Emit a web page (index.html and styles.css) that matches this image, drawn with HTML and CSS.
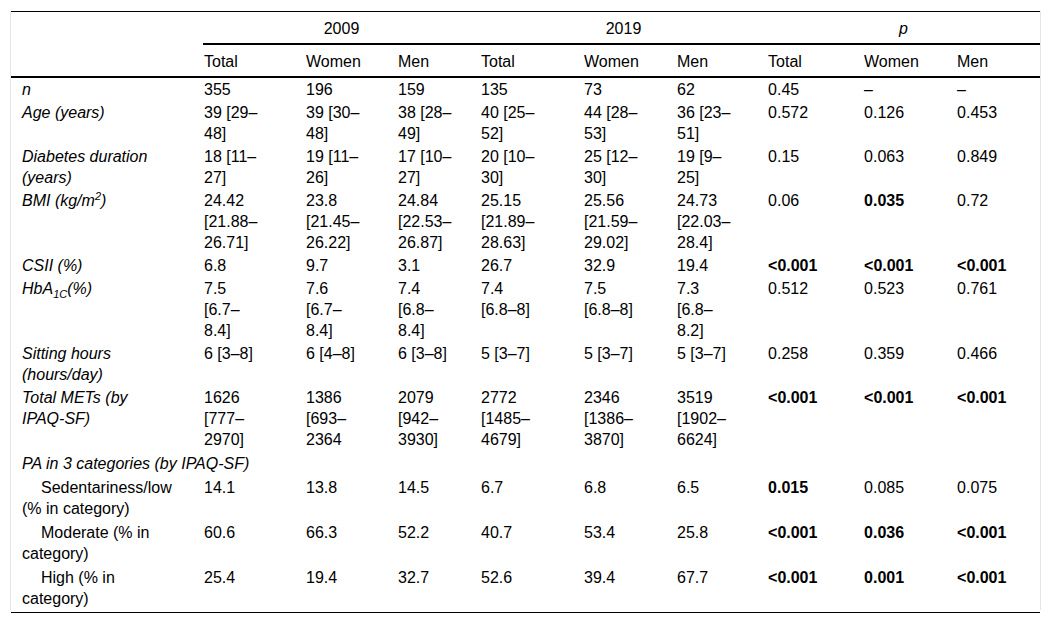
FILE: index.html
```html
<!DOCTYPE html>
<html lang="en">
<head>
<meta charset="utf-8">
<title>Table</title>
<link rel="stylesheet" href="styles.css">
</head>
<body>
<div class="wrap">
  <table class="data">
    <colgroup>
      <col class="c-label">
      <col class="c2"><col class="c3"><col class="c4">
      <col class="c5"><col class="c6"><col class="c7">
      <col class="c8"><col class="c9"><col class="c10">
    </colgroup>
    <thead>
      <tr class="years">
        <th rowspan="2" class="corner"></th>
        <th colspan="3">2009</th>
        <th colspan="3">2019</th>
        <th colspan="3"><i>p</i></th>
      </tr>
      <tr class="groups">
        <th>Total</th><th>Women</th><th>Men</th>
        <th>Total</th><th>Women</th><th>Men</th>
        <th>Total</th><th>Women</th><th>Men</th>
      </tr>
    </thead>
    <tbody>
      <tr><td class="lbl"><i>n</i></td><td>355</td><td>196</td><td>159</td><td>135</td><td>73</td><td>62</td><td>0.45</td><td>–</td><td>–</td></tr>
      <tr><td class="lbl"><i>Age (years)</i></td><td>39 [29–48]</td><td>39 [30–48]</td><td>38 [28–49]</td><td>40 [25–52]</td><td>44 [28–53]</td><td>36 [23–51]</td><td>0.572</td><td>0.126</td><td>0.453</td></tr>
      <tr><td class="lbl"><i>Diabetes duration (years)</i></td><td>18 [11–27]</td><td>19 [11–26]</td><td>17 [10–27]</td><td>20 [10–30]</td><td>25 [12–30]</td><td>19 [9–25]</td><td>0.15</td><td>0.063</td><td>0.849</td></tr>
      <tr><td class="lbl"><i>BMI (kg/m<sup>2</sup>)</i></td><td>24.42 [21.88–26.71]</td><td>23.8 [21.45–26.22]</td><td>24.84 [22.53–26.87]</td><td>25.15 [21.89–28.63]</td><td>25.56 [21.59–29.02]</td><td>24.73 [22.03–28.4]</td><td>0.06</td><td><b>0.035</b></td><td>0.72</td></tr>
      <tr><td class="lbl"><i>CSII (%)</i></td><td>6.8</td><td>9.7</td><td>3.1</td><td>26.7</td><td>32.9</td><td>19.4</td><td><b>&lt;0.001</b></td><td><b>&lt;0.001</b></td><td><b>&lt;0.001</b></td></tr>
      <tr><td class="lbl"><i>HbA<sub>1C</sub>(%)</i></td><td>7.5 [6.7–8.4]</td><td>7.6 [6.7–8.4]</td><td>7.4 [6.8–8.4]</td><td>7.4 [6.8–8]</td><td>7.5 [6.8–8]</td><td>7.3 [6.8–8.2]</td><td>0.512</td><td>0.523</td><td>0.761</td></tr>
      <tr><td class="lbl"><i>Sitting hours (hours/day)</i></td><td>6 [3–8]</td><td>6 [4–8]</td><td>6 [3–8]</td><td>5 [3–7]</td><td>5 [3–7]</td><td>5 [3–7]</td><td>0.258</td><td>0.359</td><td>0.466</td></tr>
      <tr><td class="lbl"><i>Total METs (by <span class="nowrap">IPAQ-SF)</span></i></td><td>1626 [777–2970]</td><td>1386 [693–2364</td><td>2079 [942–3930]</td><td>2772 [1485–4679]</td><td>2346 [1386–3870]</td><td>3519 [1902–6624]</td><td><b>&lt;0.001</b></td><td><b>&lt;0.001</b></td><td><b>&lt;0.001</b></td></tr>
      <tr class="cat"><td class="lbl span" colspan="10"><i>PA in 3 categories (by IPAQ-SF)</i></td></tr>
      <tr class="cat"><td class="lbl sub">Sedentariness/low (% in category)</td><td>14.1</td><td>13.8</td><td>14.5</td><td>6.7</td><td>6.8</td><td>6.5</td><td><b>0.015</b></td><td>0.085</td><td>0.075</td></tr>
      <tr class="cat"><td class="lbl sub">Moderate (% in category)</td><td>60.6</td><td>66.3</td><td>52.2</td><td>40.7</td><td>53.4</td><td>25.8</td><td><b>&lt;0.001</b></td><td><b>0.036</b></td><td><b>&lt;0.001</b></td></tr>
      <tr class="cat"><td class="lbl sub">High (% in category)</td><td>25.4</td><td>19.4</td><td>32.7</td><td>52.6</td><td>39.4</td><td>67.7</td><td><b>&lt;0.001</b></td><td><b>0.001</b></td><td><b>&lt;0.001</b></td></tr>
    </tbody>
  </table>
</div>
<div class="bottom-rule"></div>
</body>
</html>
```

FILE: styles.css
```css
html, body {
  background: #fff;
}
body {
  margin: 11px 10px 0 10px;
  font-family: "Liberation Sans", Arial, sans-serif;
  font-size: 16px;
  line-height: 21px;
  color: #000;
}
.wrap {
  width: 1029px;
  border-left: 1px solid #e6e6e6;
  border-right: 1px solid #e6e6e6;
}
.data {
  width: 1029px;
  table-layout: fixed;
  border-collapse: collapse;
  border-top: 1px solid #000;
}
.c-label { width: 192px; }
.c2 { width: 102px; }
.c3 { width: 92px; }
.c4 { width: 83px; }
.c5 { width: 103px; }
.c6 { width: 93px; }
.c7 { width: 91px; }
.c8 { width: 96px; }
.c9 { width: 93px; }
.c10 { width: 84px; }

th {
  font-weight: normal;
  line-height: 20px;
  padding: 7px 0 4px 1px;
  text-align: left;
  vertical-align: top;
}
.years th {
  text-align: center;
  padding-left: 0;
  border-bottom: 2px solid #000;
}
.years th.corner {
  border-bottom: 2px solid #000;
}
.groups th {
  border-bottom: 2px solid #000;
}
td {
  padding: 1px 0 1px 1px;
  vertical-align: top;
  text-align: left;
}
.cat td {
  padding-top: 2px;
}
td.lbl {
  padding-left: 11px;
  padding-right: 27px;
}
td.lbl.span {
  padding-right: 0;
}
td.sub {
  text-indent: 19px;
}
.nowrap {
  white-space: nowrap;
}
tbody td:nth-child(2) { padding-right: 43px; }
tbody td:nth-child(3) { padding-right: 33px; }
tbody td:nth-child(4) { padding-right: 24px; }
tbody td:nth-child(5) { padding-right: 44px; }
tbody td:nth-child(6) { padding-right: 34px; }
tbody td:nth-child(7) { padding-right: 32px; }
tbody td:nth-child(8) { padding-right: 37px; }
tbody td:nth-child(9) { padding-right: 34px; }
tbody td:nth-child(10) { padding-right: 25px; }

sup, sub {
  font-size: 11px;
  line-height: 0;
  position: relative;
  vertical-align: baseline;
}
sup { top: -6px; }
sub { top: 4px; }

.bottom-rule {
  width: 1029px;
  margin: 2px 0 0 1px;
  border-top: 1px solid #000;
}
```
